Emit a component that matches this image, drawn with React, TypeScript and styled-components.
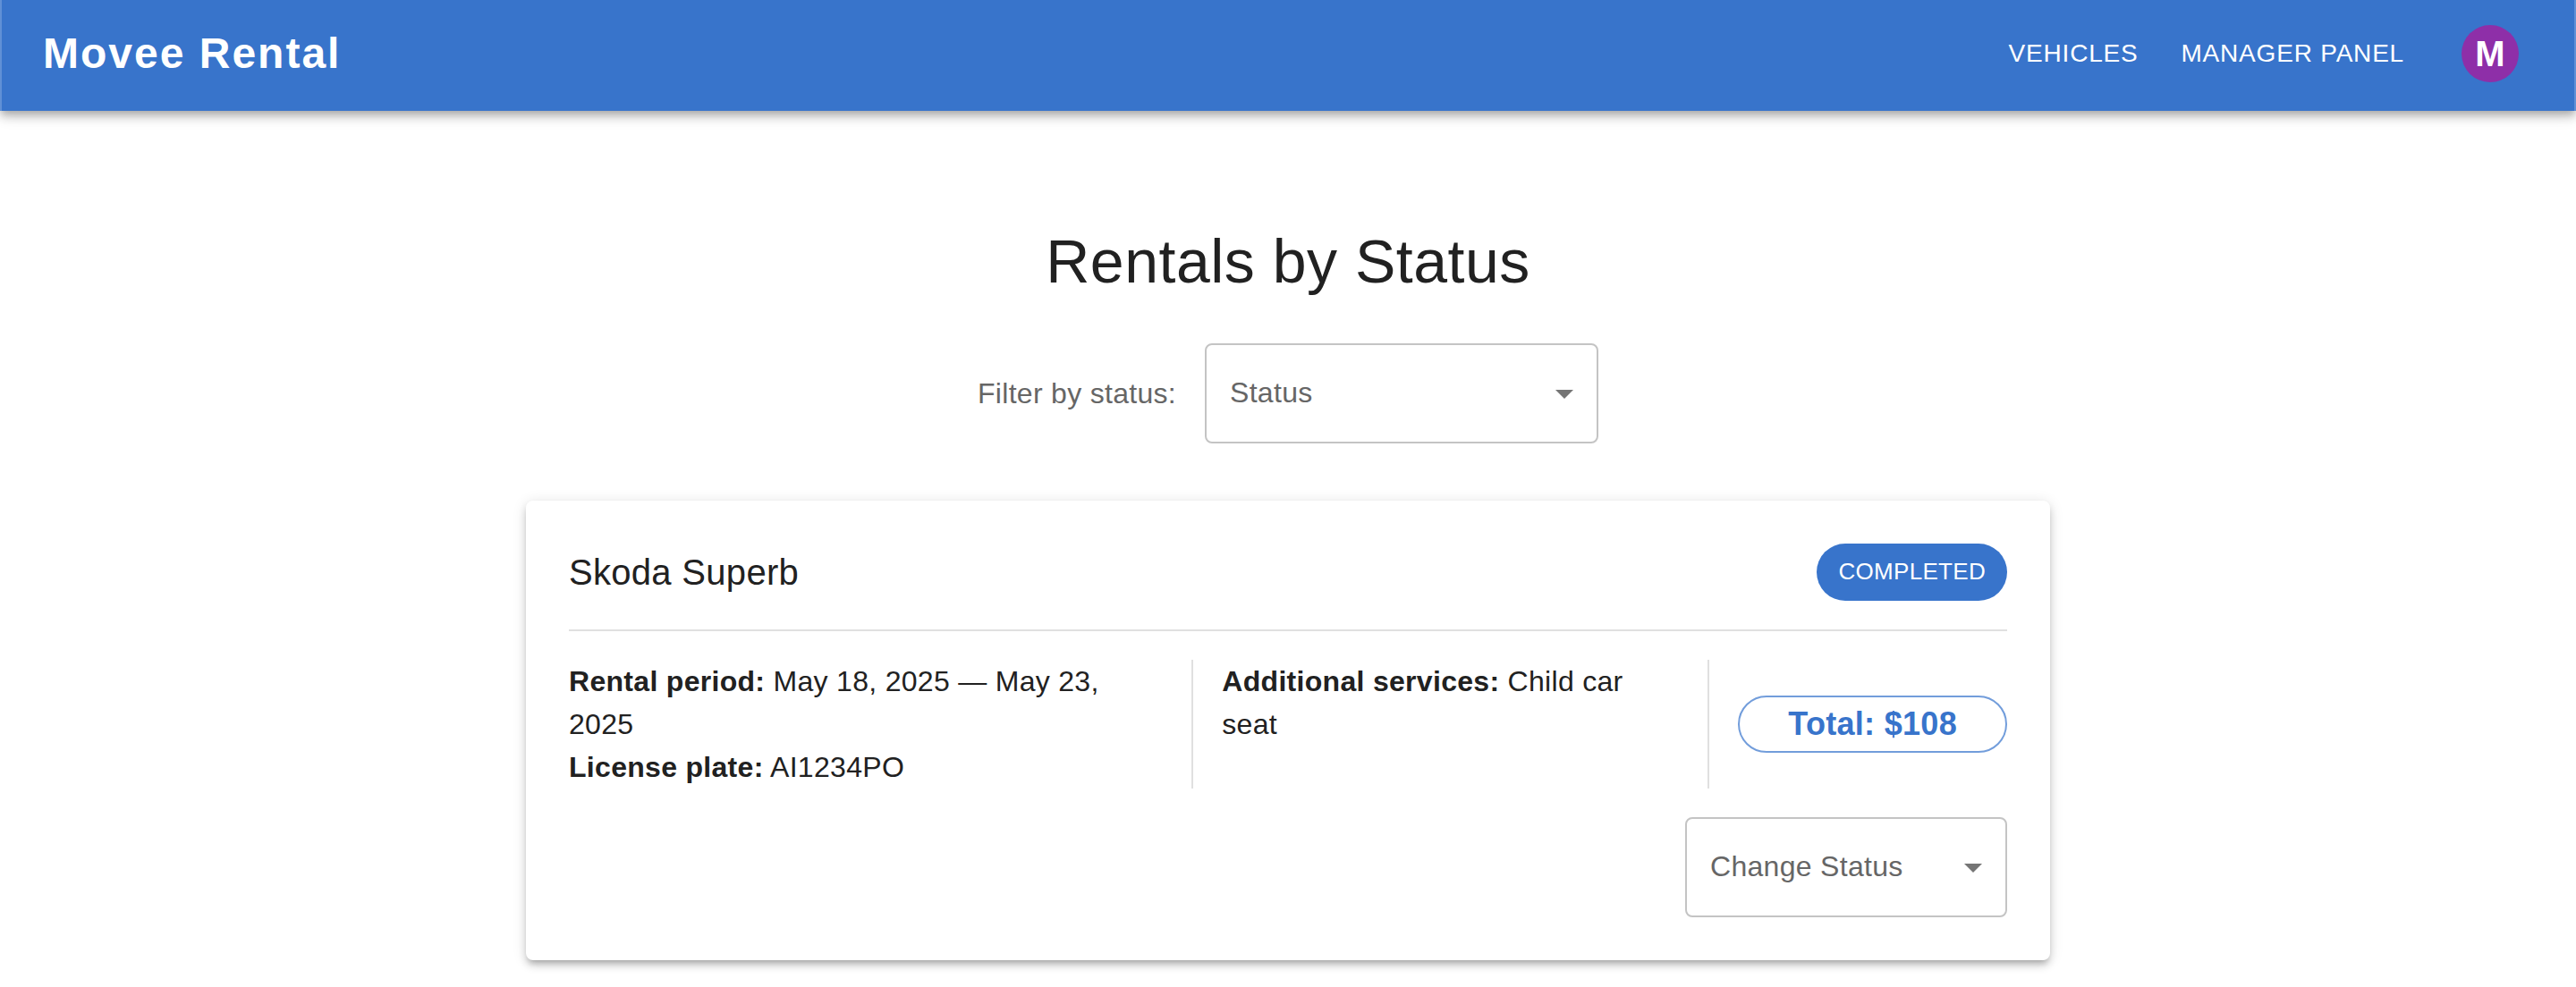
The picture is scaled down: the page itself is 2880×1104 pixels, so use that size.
import React from "react";
import styled, { createGlobalStyle } from "styled-components";

const blue = "#3874cb";
const ink = "#212121";
const muted = "#666666";
const line = "#e0e0e0";

const GlobalStyle = createGlobalStyle`
  *, *::before, *::after { box-sizing: border-box; }
  body {
    margin: 0;
    background: #ffffff;
    color: ${ink};
    font-family: "Liberation Sans", Helvetica, Arial, sans-serif;
    font-size: 32px;
    line-height: 48px;
    letter-spacing: 0.00938em;
  }
`;

const AppBar = styled.header`
  display: flex;
  align-items: center;
  justify-content: space-between;
  padding: 28px 62px 32px 46px;
  background: ${blue};
  border: 0 solid #6090d6;
  border-width: 0 2px;
  color: #ffffff;
  box-shadow: 0 4px 8px -2px rgba(0, 0, 0, 0.2), 0 8px 10px rgba(0, 0, 0, 0.14),
    0 2px 20px rgba(0, 0, 0, 0.12);
`;

const Brand = styled.a`
  color: inherit;
  font-size: 48px;
  font-weight: 700;
  line-height: 64px;
  letter-spacing: 2px;
  text-decoration: none;
`;

const Nav = styled.nav`
  display: flex;
  align-items: center;
  gap: 48px;
`;

const NavLink = styled.a`
  color: inherit;
  font-size: 28px;
  letter-spacing: 0.02857em;
  text-decoration: none;
  text-transform: uppercase;
`;

const Avatar = styled.button`
  width: 64px;
  height: 64px;
  margin-left: 16px;
  padding: 0;
  border: 0;
  border-radius: 50%;
  background: #8e2fa8;
  color: #ffffff;
  font: inherit;
  font-size: 40px;
  font-weight: 700;
  cursor: pointer;
`;

const Main = styled.main`
  display: flex;
  flex-direction: column;
  align-items: center;
  padding: 126px 48px 30px;
`;

const Title = styled.h1`
  margin: 0 0 50px;
  font-size: 68px;
  font-weight: 400;
  line-height: 84px;
  letter-spacing: 0.00735em;
`;

const Filter = styled.div`
  display: flex;
  align-items: center;
  gap: 32px;
  margin-bottom: 64px;
`;

const FilterLabel = styled.label`
  color: ${muted};
`;

const SelectBox = styled.div<{ $width: number }>`
  display: grid;
  align-items: center;
  width: ${(p) => p.$width}px;

  > * { grid-area: 1 / 1; }
`;

const NativeSelect = styled.select`
  appearance: none;
  width: 100%;
  height: 112px;
  padding: 0 64px 2px 26px;
  border: 2px solid #c4c4c4;
  border-radius: 8px;
  background: transparent;
  color: ${muted};
  font: inherit;
  letter-spacing: inherit;
`;

const Arrow = styled.svg`
  justify-self: end;
  width: 48px;
  height: 48px;
  margin-right: 14px;
  fill: #757575;
  pointer-events: none;
`;

const Card = styled.article`
  width: 100%;
  max-width: 1704px;
  padding: 48px;
  border-radius: 8px;
  background: #ffffff;
  box-shadow: 0 6px 6px -4px rgba(0, 0, 0, 0.2), 0 6px 8px rgba(0, 0, 0, 0.14),
    0 2px 16px rgba(0, 0, 0, 0.12);
`;

const CardHeader = styled.div`
  display: flex;
  align-items: center;
  justify-content: space-between;
  padding-bottom: 32px;
  border-bottom: 2px solid ${line};
`;

const CarName = styled.h2`
  margin: 0;
  font-size: 40px;
  font-weight: 400;
  line-height: 64px;
  letter-spacing: 0.0075em;
`;

const StatusChip = styled.span`
  padding: 0 24px 2px;
  border-radius: 32px;
  background: ${blue};
  color: #ffffff;
  font-size: 26px;
  line-height: 62px;
  text-transform: uppercase;
`;

const Details = styled.div`
  display: flex;
  gap: 32px;
  padding: 32px 0;
`;

const Column = styled.div<{ $grow: number }>`
  flex: ${(p) => p.$grow} 1 0;
  border-right: 2px solid ${line};
  padding-right: 32px;
`;

const Text = styled.p`
  margin: 0;
`;

const TotalChip = styled.div`
  align-self: center;
  padding: 0 54px;
  border: 2px solid #729ddb;
  border-radius: 32px;
  color: ${blue};
  font-size: 36px;
  font-weight: 700;
  line-height: 60px;
`;

const Actions = styled.div`
  display: flex;
  justify-content: flex-end;
`;

type StatusSelectProps = {
  id: string;
  placeholder: string;
  width: number;
  label?: string;
};

function StatusSelect({ id, placeholder, width, label }: StatusSelectProps) {
  return (
    <SelectBox $width={width}>
      <NativeSelect id={id} aria-label={label} defaultValue="">
        <option value="">{placeholder}</option>
      </NativeSelect>
      <Arrow viewBox="0 0 24 24" aria-hidden="true">
        <path d="M7 10l5 5 5-5z" />
      </Arrow>
    </SelectBox>
  );
}

export default function App() {
  return (
    <>
      <GlobalStyle />
      <AppBar>
        <Brand href="#">Movee Rental</Brand>
        <Nav>
          <NavLink href="#vehicles">Vehicles</NavLink>
          <NavLink href="#manager">Manager Panel</NavLink>
          <Avatar type="button">M</Avatar>
        </Nav>
      </AppBar>
      <Main>
        <Title>Rentals by Status</Title>
        <Filter>
          <FilterLabel htmlFor="status-filter">Filter by status:</FilterLabel>
          <StatusSelect id="status-filter" placeholder="Status" width={440} />
        </Filter>
        <Card>
          <CardHeader>
            <CarName>Skoda Superb</CarName>
            <StatusChip>Completed</StatusChip>
          </CardHeader>
          <Details>
            <Column $grow={13}>
              <Text>
                <strong>Rental period:</strong> May 18, 2025 — May 23, 2025
              </Text>
              <Text>
                <strong>License plate:</strong> AI1234PO
              </Text>
            </Column>
            <Column $grow={10}>
              <Text>
                <strong>Additional services:</strong> Child car seat
              </Text>
            </Column>
            <TotalChip>Total: $108</TotalChip>
          </Details>
          <Actions>
            <StatusSelect
              id="change-status"
              placeholder="Change Status"
              width={360}
              label="Change Status"
            />
          </Actions>
        </Card>
      </Main>
    </>
  );
}
